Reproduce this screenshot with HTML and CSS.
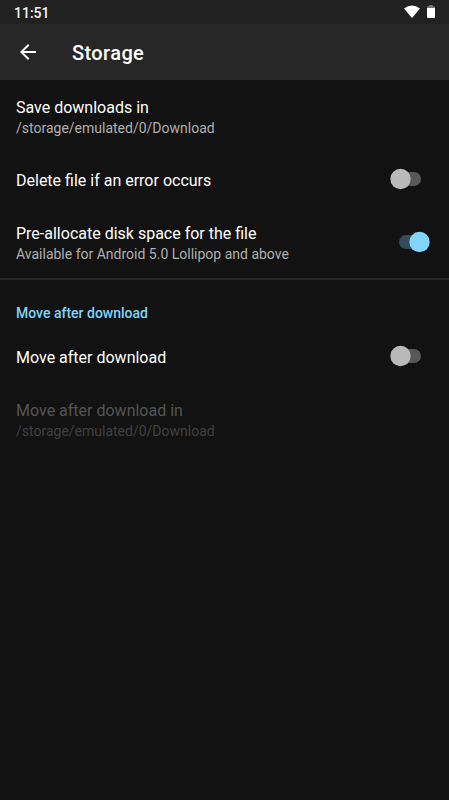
FILE: index.html
```html
<!DOCTYPE html>
<html lang="en">
<head>
<meta charset="utf-8">
<title>Storage</title>
<link rel="stylesheet" href="styles.css">
</head>
<body>
<div class="status">
  <span class="clock">11:51</span>
  <span class="status-icons">
    <svg width="16" height="13" viewBox="0 0 16 13"><path fill="#fff" d="M0 3.500Q8-2.500 16 3.500L8 13Z"/></svg>
    <svg width="8" height="13" viewBox="0 0 8 13"><path fill="#777" d="M2.300 0h3.400v1.300H7q1 0 1 1V3H0V2.300q0-1 1-1h1.300Z"/><path fill="#fff" d="M0 3h8v9q0 1-1 1H1q-1 0-1-1Z"/></svg>
  </span>
</div>
<header class="bar">
  <svg class="back" width="24" height="24" viewBox="0 0 24 24"><path fill="#fff" d="M20 11H7.830l5.590-5.590L12 4l-8 8 8 8 1.410-1.410L7.830 13H20v-2z"/></svg>
  <h1>Storage</h1>
</header>
<main>
  <section class="group">
    <div class="row double"><div><p class="title">Save downloads in</p><p class="summary">/storage/emulated/0/Download</p></div></div>
    <div class="row single"><p class="title">Delete file if an error occurs</p><span class="switch"></span></div>
    <div class="row double"><div><p class="title">Pre-allocate disk space for the file</p><p class="summary">Available for Android 5.0 Lollipop and above</p></div><span class="switch on"></span></div>
  </section>
  <section class="group">
    <h2>Move after download</h2>
    <div class="row single"><p class="title">Move after download</p><span class="switch"></span></div>
    <div class="row double disabled"><div><p class="title">Move after download in</p><p class="summary">/storage/emulated/0/Download</p></div></div>
  </section>
</main>
</body>
</html>
```
FILE: styles.css
```css
* { box-sizing: border-box; margin: 0; }
body { height: 800px; overflow: hidden; background: #121212; color: #fff; font-family: Roboto, sans-serif; }
.status { height: 24px; background: #212121; display: flex; justify-content: space-between; padding: 0 14px; }
.clock { font-size: 14px; font-weight: 500; line-height: 26px; color: #f2f2f2; }
.status-icons { display: flex; gap: 7px; padding-top: 5px; }
.bar { height: 56px; background: #272727; display: flex; align-items: center; padding: 0 16px; gap: 32px; }
h1 { font-size: 20px; font-weight: 500; letter-spacing: .4px; line-height: 24px; padding-top: 2px; }
.group:first-child { height: 198px; }
.group + .group { border-top: 2px solid #252525; padding-top: 9px; }
.row { display: flex; align-items: center; justify-content: space-between; padding: 0 19px 0 16px; }
.double { height: 72px; padding-top: 3px; }
.single { height: 54px; padding-top: 2px; }
.title { font-size: 16px; line-height: 21px; }
.summary { font-size: 14px; line-height: 20px; color: #b0b0b0; }
h2 { font-size: 14px; font-weight: 500; line-height: 20px; padding: 14px 16px 6px; color: #81d4fa; }
.disabled .title { color: #555; }
.disabled .summary { color: #404040; }
.switch { position: relative; width: 40px; height: 20px; margin-top: -3px; flex: none; }
.switch::before { content: ""; position: absolute; left: 8px; top: 3px; width: 23px; height: 14px; border-radius: 7px; background: #585858; }
.switch::after { content: ""; position: absolute; left: 0; top: 0; width: 20px; height: 20px; border-radius: 50%; background: #b9b9b9; transform: translateX(.5px) scale(1.020); }
.switch.on::before { left: 9px; background: #334c58; }
.switch.on::after { left: 19px; background: #81d4fa; }
```
